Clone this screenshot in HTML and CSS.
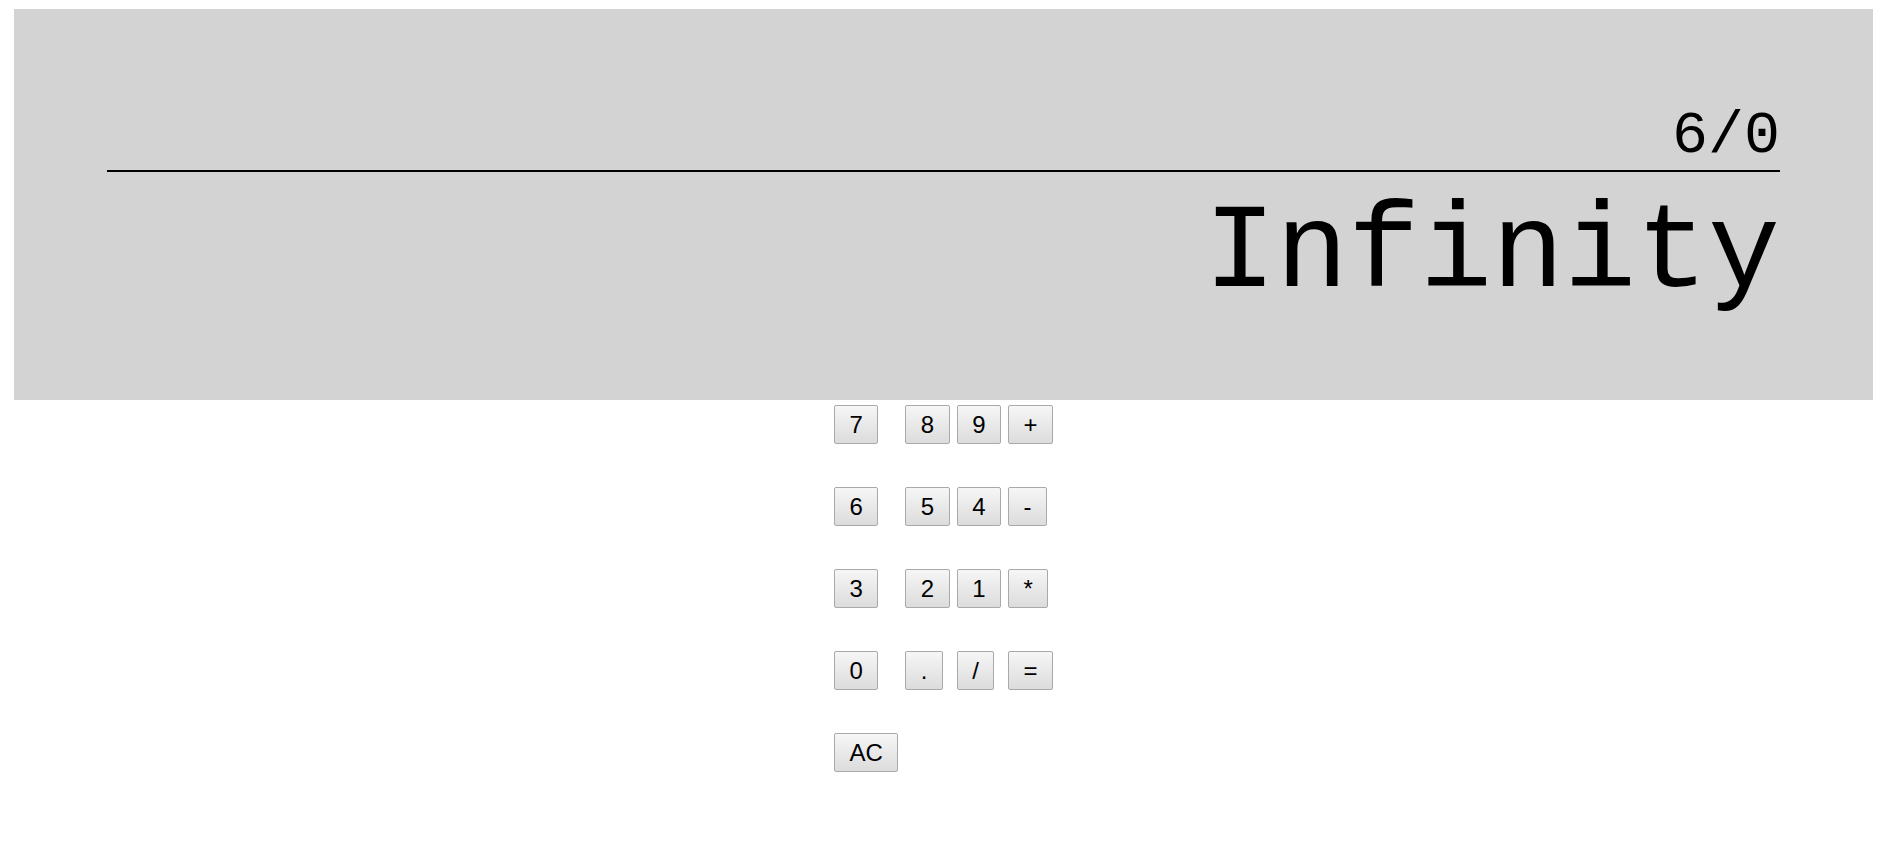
FILE: index.html
```html
<!DOCTYPE html>
<html lang="en">
<head>
<meta charset="utf-8">
<title>Calculator</title>
<link rel="stylesheet" href="styles.css">
</head>
<body>
<div class="calculator">
  <div class="display">
    <div class="previous">6/0</div>
    <div class="current">Infinity</div>
  </div>
  <div class="keys">
    <button class="key">7</button>
    <button class="key">8</button>
    <button class="key">9</button>
    <button class="key">+</button>
    <button class="key">6</button>
    <button class="key">5</button>
    <button class="key">4</button>
    <button class="key">-</button>
    <button class="key">3</button>
    <button class="key">2</button>
    <button class="key">1</button>
    <button class="key">*</button>
    <button class="key">0</button>
    <button class="key">.</button>
    <button class="key">/</button>
    <button class="key">=</button>
    <button class="key">AC</button>
  </div>
</div>
</body>
</html>
```
FILE: styles.css
```css
html, body {
  background: #ffffff;
}
body {
  margin: 9px 31px 0 14px;
  font-family: "Liberation Sans", Arial, sans-serif;
}
.display {
  background: #d3d3d3;
  padding: 93px 93px 78px 93px;
  font-family: "Liberation Mono", "Courier New", monospace;
  color: #000;
  text-align: right;
}
.previous {
  font-size: 60px;
  line-height: 68px;
  border-bottom: 2px solid #000;
}
.current {
  margin-top: 14px;
  font-size: 120px;
  line-height: 136px;
}
.keys {
  display: grid;
  grid-template-columns: repeat(4, auto);
  justify-content: center;
  justify-items: start;
  column-gap: 7px;
  row-gap: 43px;
  margin-top: 5px;
}
.key {
  font-family: "Liberation Sans", Arial, sans-serif;
  font-size: 24px;
  line-height: 27px;
  padding: 5px 14.5px;
  color: #000;
  background: linear-gradient(#f6f6f6, #dcdcdc);
  border: 1px solid #a9a9a9;
  border-radius: 2px;
  margin: 0;
}
```
